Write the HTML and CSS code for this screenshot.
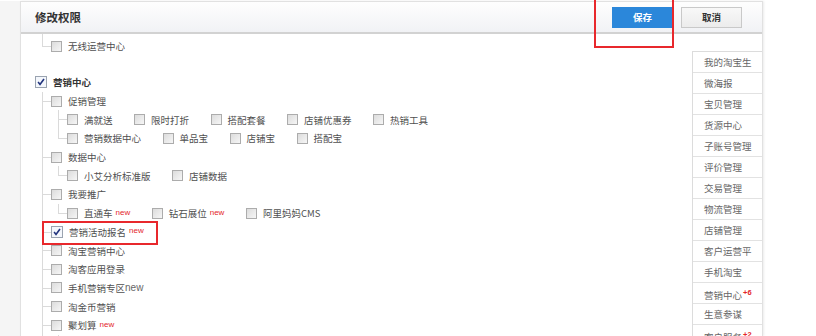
FILE: index.html
```html
<!DOCTYPE html>
<html lang="zh-CN">
<head>
    <meta charset="UTF-8">
    <title>修改权限</title>
    <link rel="stylesheet" href="styles.css">
</head>
<body>
    <div class="page">
        <div class="strip"></div>
        <div class="panel">
            <div class="panel-head">
                <h2>修改权限</h2>
                <div class="actions">
                    <button class="btn btn-save">保存</button>
                    <button class="btn btn-cancel">取消</button>
                </div>
            </div>

            <div class="panel-body">
                <div class="tree">
                    <ul class="branch first">
                        <li class="last"><div class="row"><span class="cb"></span>无线运营中心</div></li>
                    </ul>

                    <div class="group">
                        <div class="row root">
                            <span class="cb on"><svg viewBox="0 0 11 11"><path d="M2.3 5.6 L4.4 8.2 L8.8 2.2"/></svg></span>营销中心
                        </div>
                        <ul class="branch">
                            <li>
                                <div class="row"><span class="cb"></span>促销管理</div>
                                <ul class="branch">
                                    <li>
                                        <div class="row">
                                            <span class="opt"><span class="cb"></span>满就送</span>
                                            <span class="opt"><span class="cb"></span>限时打折</span>
                                            <span class="opt"><span class="cb"></span>搭配套餐</span>
                                            <span class="opt"><span class="cb"></span>店铺优惠券</span>
                                            <span class="opt"><span class="cb"></span>热销工具</span>
                                        </div>
                                    </li>
                                    <li class="last">
                                        <div class="row">
                                            <span class="opt"><span class="cb"></span>营销数据中心</span>
                                            <span class="opt"><span class="cb"></span>单品宝</span>
                                            <span class="opt"><span class="cb"></span>店铺宝</span>
                                            <span class="opt"><span class="cb"></span>搭配宝</span>
                                        </div>
                                    </li>
                                </ul>
                            </li>
                            <li>
                                <div class="row"><span class="cb"></span>数据中心</div>
                                <ul class="branch">
                                    <li class="last">
                                        <div class="row">
                                            <span class="opt"><span class="cb"></span>小艾分析标准版</span>
                                            <span class="opt"><span class="cb"></span>店铺数据</span>
                                        </div>
                                    </li>
                                </ul>
                            </li>
                            <li>
                                <div class="row"><span class="cb"></span>我要推广</div>
                                <ul class="branch">
                                    <li class="last">
                                        <div class="row">
                                            <span class="opt"><span class="cb"></span>直通车<em class="new">new</em></span>
                                            <span class="opt"><span class="cb"></span>钻石展位<em class="new">new</em></span>
                                            <span class="opt"><span class="cb"></span>阿里妈妈CMS</span>
                                        </div>
                                    </li>
                                </ul>
                            </li>
                            <li>
                                <div class="row">
                                    <span class="cb on"><svg viewBox="0 0 11 11"><path d="M2.3 5.6 L4.4 8.2 L8.8 2.2"/></svg></span>营销活动报名<em class="new">new</em>
                                </div>
                            </li>
                            <li><div class="row"><span class="cb"></span>淘宝营销中心</div></li>
                            <li><div class="row"><span class="cb"></span>淘客应用登录</div></li>
                            <li><div class="row"><span class="cb"></span>手机营销专区<span class="new-plain">new</span></div></li>
                            <li><div class="row"><span class="cb"></span>淘金币营销</div></li>
                            <li>
                                <div class="row"><span class="cb"></span>聚划算<em class="new">new</em></div>
                                <ul class="branch">
                                    <li class="last"><div class="row"><span class="cb"></span></div></li>
                                </ul>
                            </li>
                        </ul>
                    </div>
                </div>

                <ul class="side-nav">
                    <li>我的淘宝生</li>
                    <li>微海报</li>
                    <li>宝贝管理</li>
                    <li>货源中心</li>
                    <li>子账号管理</li>
                    <li>评价管理</li>
                    <li>交易管理</li>
                    <li>物流管理</li>
                    <li>店铺管理</li>
                    <li>客户运营平</li>
                    <li>手机淘宝</li>
                    <li>营销中心<sup>+6</sup></li>
                    <li>生意参谋</li>
                    <li>客户服务<sup>+2</sup></li>
                </ul>
            </div>
        </div>

        <!-- red annotation boxes -->
        <div class="mark mark-save"></div>
        <div class="mark mark-row"></div>
    </div>
</body>
</html>
```

FILE: styles.css
```css
* {
    margin: 0;
    padding: 0;
    box-sizing: border-box;
}

body {
    font-family: "Noto Sans CJK SC", "Liberation Sans", sans-serif;
    font-size: 9.5px;
    color: #4f4f4f;
    background: #fff;
    height: 336px;
    overflow: hidden;
}

.page {
    position: relative;
    display: flex;
    padding-top: 1px;
    height: 336px;
}

.strip {
    width: 20px;
    background: #f5f5f5;
}

.panel {
    width: 743px;
    border: 1px solid #e1e1e1;
    border-bottom: none;
    background: #fff;
    box-shadow: 1px 0 2px rgba(0,0,0,0.08);
}

.panel-head {
    height: 32px;
    display: flex;
    align-items: center;
    justify-content: space-between;
    padding: 0 20px 0 14px;
    background: linear-gradient(#fefefe, #f1f2f5);
    border-bottom: 2px solid #d2d2d2;
}

.panel-head h2 {
    font-size: 11.5px;
    font-weight: bold;
    color: #333;
}

.actions {
    display: flex;
    gap: 8px;
}

.btn {
    width: 61px;
    height: 21px;
    font-family: inherit;
    font-size: 9.5px;
    font-weight: bold;
    cursor: pointer;
}

.btn-save {
    background: #2b87da;
    color: #fff;
    border: 1px solid #2b87da;
}

.btn-cancel {
    background: linear-gradient(#f8f8f8, #ececec);
    color: #333;
    border: 1px solid #c9c9c9;
}

.panel-body {
    display: flex;
}

.tree {
    flex: 1;
    padding: 3px 0 0 14px;
}

.group {
    margin-top: 16px;
}

.row {
    height: 18.7px;
    display: flex;
    align-items: center;
    white-space: nowrap;
}

.row.root {
    height: 20px;
    font-weight: bold;
    color: #333;
}

.cb {
    width: 11px;
    height: 11px;
    margin-right: 6px;
    flex-shrink: 0;
    border: 1px solid #acacac;
    background: linear-gradient(135deg, #dcdcdc, #f6f6f6);
}

.cb.on {
    width: 12px;
    height: 12px;
    background: #f4f7fc;
    border-color: #9aa3b0;
}

.cb svg {
    display: block;
    width: 10px;
    height: 10px;
}

.cb svg path {
    fill: none;
    stroke: #22347e;
    stroke-width: 1.8;
}

.opt {
    display: inline-flex;
    align-items: center;
    margin-right: 21.5px;
}

.new {
    font-family: "Liberation Sans", sans-serif;
    font-style: normal;
    font-size: 8px;
    color: #e4262b;
    margin-left: 3px;
    position: relative;
    top: -1px;
}

.new-plain {
    font-family: "Liberation Sans", sans-serif;
    font-size: 10px;
    color: #666;
}

.branch {
    list-style: none;
    padding-left: 16px;
}

.branch > li {
    position: relative;
}

.branch > li::before {
    content: "";
    position: absolute;
    left: -9px;
    top: 0;
    bottom: 0;
    border-left: 1px solid #dadada;
}

.branch > li.last::before {
    bottom: auto;
    height: 9px;
}

.branch > li::after {
    content: "";
    position: absolute;
    left: -9px;
    top: 9px;
    width: 9px;
    border-top: 1px solid #dadada;
}

.branch.first > li::before {
    top: -3px;
    height: 12px;
}

.side-nav {
    list-style: none;
    width: 70px;
    margin-top: 17px;
    border-left: 1px solid #dcdcdc;
    border-top: 1px solid #dcdcdc;
    background: #fff;
}

.side-nav li {
    height: 21px;
    line-height: 20px;
    padding: 0 11px;
    border-bottom: 1px solid #e2e2e2;
    color: #666;
    white-space: nowrap;
    overflow: hidden;
}

.side-nav sup {
    font-family: "Liberation Sans", sans-serif;
    font-size: 7.5px;
    font-weight: bold;
    color: #e4262b;
    margin-left: 1px;
}

.mark {
    position: absolute;
    border: 2px solid #e8282c;
}

.mark-save {
    left: 594px;
    top: -3px;
    width: 80px;
    height: 51px;
}

.mark-row {
    left: 42px;
    top: 221px;
    width: 116px;
    height: 24px;
}
```
